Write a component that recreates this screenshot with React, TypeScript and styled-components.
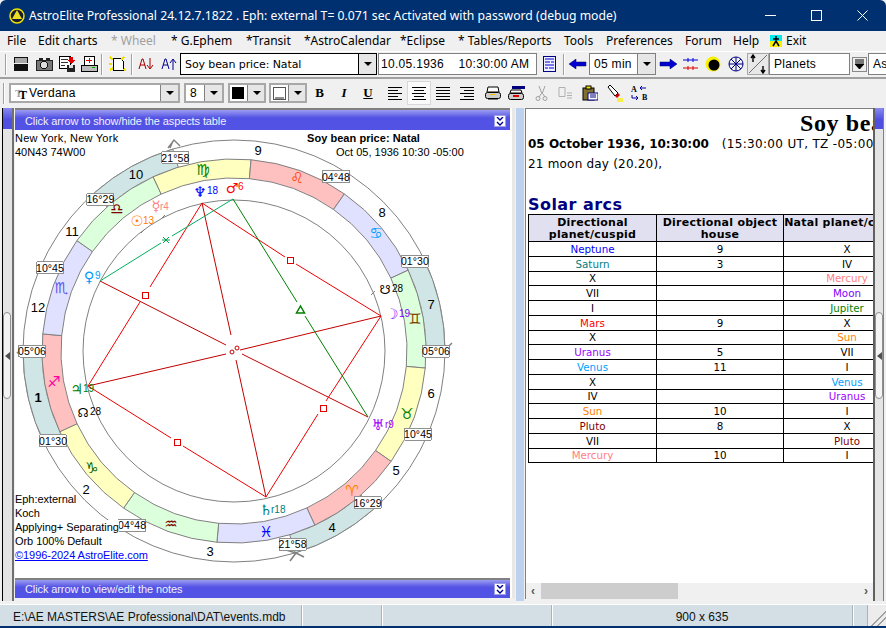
import React, { FC, ReactNode } from 'react';
import styled, { createGlobalStyle } from 'styled-components';

const GlobalStyle = createGlobalStyle`
  html, body { margin: 0; padding: 0; background: #f0f0f0; overflow: hidden; }
  #root { width: 886px; height: 628px; }
`;

const uiFont = `"Liberation Sans", Arial, sans-serif`;
const wideFont = `"DejaVu Sans", Verdana, sans-serif`;

const Window = styled.div`
  width: 886px;
  height: 628px;
  display: flex;
  flex-direction: column;
  background: #f0f0f0;
  overflow: hidden;
  font-family: ${uiFont};
  color: #000;
  border-radius: 6px 6px 0 0;
  border-bottom: 2px solid #00306f;
  box-sizing: border-box;
`;

const TitleBar = styled.div`
  height: 31px;
  flex: none;
  background: #00306f;
  color: #fff;
  display: flex;
  align-items: center;
  padding: 0 1px 0 9px;
  font: 12.2px "Noto Sans", sans-serif;
`;

const TitleText = styled.span`
  margin-left: 4px;
  flex: 1;
  white-space: nowrap;
`;

const Caption = styled.button`
  width: 46px;
  height: 31px;
  padding: 0;
  border: 0;
  background: none;
  display: flex;
  align-items: center;
  justify-content: center;
`;

const Menu = styled.div`
  height: 21px;
  flex: none;
  display: flex;
  align-items: center;
  padding-bottom: 1px;
  box-sizing: border-box;
  font: 12px "Noto Sans", sans-serif;
  white-space: nowrap;
  border-bottom: 1px solid #fff;
  margin-bottom: 1px;
`;

const MenuItem = styled.span<{ $w: number; $off?: boolean }>`
  width: ${p => p.$w}px;
  flex: none;
  color: ${p => (p.$off ? '#a0a0a0' : '#000')};
`;

const Bar = styled.div<{ $h: number; $line?: boolean }>`
  height: ${p => p.$h}px;
  flex: none;
  display: flex;
  align-items: center;
  position: relative;
  border-bottom: ${p => (p.$line ? '2px solid #a0a0a0' : '0')};
  padding-bottom: ${p => (p.$line ? 2 : 0)}px;
  box-sizing: border-box;
`;

const Grip = styled.i<{ $m?: number; $mr?: number }>`
  width: 1px;
  height: 21px;
  flex: none;
  background: #a0a0a0;
  border-right: 1px solid #fff;
  margin: 0 ${p => p.$mr ?? p.$m ?? 3}px 0 ${p => p.$m ?? 3}px;
`;

const Tool = styled.span<{ $w?: number; $pressed?: boolean; $ml?: number }>`
  width: ${p => p.$w ?? 24}px;
  height: 22px;
  margin-left: ${p => p.$ml ?? 0}px;
  flex: none;
  display: flex;
  align-items: center;
  justify-content: center;
  box-sizing: border-box;
  ${p => p.$pressed && 'background: #fafafa; border: 1px solid #d8d8d8; height: 24px;'}
`;

const Field = styled.div<{ $w: number; $dark?: boolean; $ml?: number; $pad?: number }>`
  width: ${p => p.$w}px;
  height: 22px;
  margin-left: ${p => p.$ml ?? 0}px;
  flex: none;
  box-sizing: border-box;
  background: #fff;
  border: 1px solid ${p => (p.$dark ? '#000' : '#808080')};
  display: flex;
  align-items: center;
  padding-left: ${p => p.$pad ?? 4}px;
  font: 12px ${uiFont};
  white-space: nowrap;
  overflow: hidden;
  position: relative;
`;

const FieldText = styled.span<{ $wide?: boolean }>`
  flex: 1;
  font-family: ${p => (p.$wide ? wideFont : uiFont)};
  font-size: ${p => (p.$wide ? 11 : 12)}px;
  letter-spacing: ${p => (p.$wide ? -0.1 : 0.3)}px;
`;

const Drop = styled.span<{ $dark?: boolean }>`
  width: 17px;
  align-self: stretch;
  flex: none;
  background: #e6e6e6;
  border-left: 1px solid ${p => (p.$dark ? '#000' : '#808080')};
  display: flex;
  align-items: center;
  justify-content: center;
  &::after {
    content: '';
    border: 4px solid transparent;
    border-top: 4px solid #000;
    border-bottom: 0;
  }
`;

const FormatField = styled(Field)`
  height: 20px;
  border: 2px solid #a8a8a8;
`;

const Main = styled.div`
  flex: 1;
  min-height: 0;
  display: flex;
  background: #f0f0f0;
  padding-top: 1px;
`;

const Rail = styled.div`
  width: 9px;
  margin-left: 2px;
  flex: none;
  border-left: 1px solid #000;
  border-right: 2px solid #707070;
  background: #e4e4e4;
  position: relative;
  display: flex;
  flex-direction: column;
  margin-bottom: 3px;
`;

const RailHead = styled.div`
  height: 21px;
  background: linear-gradient(#8a8af0, #5050e0 55%);
`;

const RailGrip = styled.div<{ $side: 'left' | 'right' }>`
  position: absolute;
  top: 204px;
  ${p => p.$side}: 0;
  width: 6px;
  height: 85px;
  background: #f4f4f4;
  border: 1px solid #909090;
  border-radius: 4px;
  display: flex;
  align-items: center;
  justify-content: center;
  &::after {
    content: '';
    border: 4px solid transparent;
    border-right: 5px solid #505050;
    border-left: 0;
  }
`;

const ChartPanel = styled.section`
  width: 497px;
  margin-left: 1px;
  flex: none;
  background: #fff;
  display: flex;
  flex-direction: column;
  position: relative;
  border-right: 3px solid #e8e8e8;
  margin-bottom: 6px;
  box-sizing: content-box;
`;

const FoldBar = styled.div<{ $h: number }>`
  height: ${p => p.$h}px;
  flex: none;
  width: 495px;
  border-top: 2px solid #808080;
  background: linear-gradient(#9c9cf2, #5252e4 40%);
  color: #f0f0ff;
  font: 11px ${uiFont};
  letter-spacing: -0.1px;
  display: flex;
  align-items: center;
  justify-content: space-between;
  padding: ${p => (p.$h > 20 ? 2 : 0)}px 4px 0 10px;
  box-sizing: border-box;
`;

const FoldArrow = styled.span`
  width: 12px;
  height: 12px;
  background: #fff;
  border: 1px solid #a0a0e0;
  box-sizing: border-box;
  display: flex;
  align-items: center;
  justify-content: center;
`;

const Canvas = styled.div`
  flex: 1;
  position: relative;
  min-height: 0;
`;

const Wheel = styled.svg`
  display: block;
  position: absolute;
  left: -15px;
  top: -130px;
  overflow: visible;
`;

const Note = styled.div<{ $top?: number; $tight?: boolean }>`
  position: absolute;
  left: 0;
  top: ${p => p.$top ?? 1}px;
  font: 11px/14px ${uiFont};
  letter-spacing: ${p => (p.$tight ? 0 : 0.24)}px;
  white-space: nowrap;
`;

const Legend = styled.div`
  position: absolute;
  left: 0;
  top: 362px;
  display: flex;
  flex-direction: column;
  align-items: flex-start;
  font: 11px/14px ${uiFont};
  letter-spacing: -0.05px;
  white-space: nowrap;
`;

const LegendLine = styled.span`
  background: #fff;
  a { color: #0000ff; text-decoration: underline; }
`;

const ChartTitle = styled.b`
  position: absolute;
  left: 292px;
  top: 1px;
  font: bold 11px/14px ${uiFont};
  letter-spacing: 0.05px;
  white-space: nowrap;
`;

const ChartDate = styled.span`
  position: absolute;
  left: 321px;
  top: 15px;
  font: 11px/14px ${uiFont};
  white-space: nowrap;
`;

const Splitter = styled.div`
  width: 8px;
  flex: none;
  background: #bcd2ee;
  margin: 0 1px 3px 1px;
`;

const ReportPanel = styled.section`
  width: 348px;
  flex: none;
  background: #fff;
  border: 1px solid #808080;
  border-width: 1px 0 0 1px;
  box-sizing: border-box;
  display: flex;
  flex-direction: column;
  margin-bottom: 5px;
`;

const ReportBody = styled.div`
  flex: 1;
  overflow: hidden;
  min-height: 0;
  padding: 1px 0 0 2px;
  white-space: nowrap;
  font: 11px ${wideFont};
`;

const ReportTitle = styled.div`
  font: bold 24px/26px "Liberation Serif", serif;
  letter-spacing: 0.6px;
  padding-left: 272px;
`;

const ReportDate = styled.div`
  height: 20px;
  line-height: 16px;
  font-size: 12px;
  display: flex;
  b { margin-right: 13px; }
  span { letter-spacing: 0.32px; }
`;

const ReportMoon = styled.div`
  height: 21px;
  line-height: 16px;
  font-size: 12px;
  letter-spacing: 0.2px;
`;

const ReportHead = styled.h2`
  margin: 18px 0 -1px;
  font: bold 16px/20px ${wideFont};
  color: #000080;
  letter-spacing: 0.45px;
`;

const Sheet = styled.table`
  border-collapse: collapse;
  margin: 0;
  table-layout: fixed;
  width: 382px;
  font: 10.3px/12px ${wideFont};
  td, th { border: 1px solid #000; text-align: center; padding: 0; overflow: hidden; }
  td { height: 13.75px; }
  th { background: #e0e0f0; font-size: 11px; line-height: 12px; height: 27px; padding-top: 2px; box-sizing: border-box; vertical-align: top; letter-spacing: 0.25px; }
  col:nth-child(1) { width: 128px; }
  col:nth-child(2), col:nth-child(3) { width: 127px; }
`;

const Cell = styled.td<{ $c?: string }>`
  color: ${p => p.$c ?? '#000'};
`;

const HScroll = styled.div`
  height: 16px;
  flex: none;
  background: #f0f0f0;
  display: flex;
  align-items: center;
  justify-content: space-between;
  padding: 0 5px;
  font: bold 12px ${uiFont};
  color: #555;
  position: relative;
  box-sizing: border-box;
`;

const HThumb = styled.span`
  position: absolute;
  left: 15px;
  top: 0;
  width: 137px;
  height: 16px;
  background: #cdcdcd;
`;

const RightRail = styled(Rail)`
  margin-left: 0;
  width: 8px;
  border-left: 2px solid #606060;
  border-right: 1px solid #808080;
`;

const StatusBar = styled.footer`
  height: 22px;
  flex: none;
  display: flex;
  background: #d3dfe5;
  border-top: 1px solid #fff;
  box-sizing: border-box;
  font: 12px ${uiFont};
  color: #111;
`;

const StatusCell = styled.div<{ $w: number; $center?: boolean }>`
  width: ${p => p.$w}px;
  flex: none;
  box-sizing: border-box;
  padding-left: ${p => (p.$center ? 0 : 13)}px;
  text-align: ${p => (p.$center ? 'center' : 'left')};
  line-height: 24px;
  border-right: 1px solid #a8b4ba;
  box-shadow: 1px 0 0 #fff;
  white-space: nowrap;
`;

const ResizeGrip = styled.div`
  flex: 1;
  background: linear-gradient(135deg, #ececec 60%, #a0a0a0 60%, #a0a0a0 66%, #ececec 66%, #ececec 76%, #a0a0a0 76%, #a0a0a0 82%, #ececec 82%);
`;

const Ico: FC<{ w?: number; h?: number; children: ReactNode }> = ({ w = 18, h = 18, children }) => (
  <svg width={w} height={h} viewBox={`0 0 ${w} ${h}`} shapeRendering="crispEdges">{children}</svg>
);

const menuItems: [string, number, boolean?][] = [
  ['File', 31], ['Edit charts', 73], ['* Wheel', 60, true], ['* G.Ephem', 75], ['*Transit', 58],
  ['*AstroCalendar', 96], ['*Eclipse', 58], ['* Tables/Reports', 106], ['Tools', 42], ['Preferences', 79],
  ['Forum', 48], ['Help', 37],
];

const cx = 234;
const cy = 351;
const pt = (r: number, deg: number) => {
  const a = (deg * Math.PI) / 180;
  return [cx + r * Math.cos(a), cy - r * Math.sin(a)];
};
// a0 < a1, both in degrees, counterclockwise on screen
const sector = (r0: number, r1: number, a0: number, a1: number) => {
  const [x0, y0] = pt(r1, a0);
  const [x1, y1] = pt(r1, a1);
  const [x2, y2] = pt(r0, a1);
  const [x3, y3] = pt(r0, a0);
  return `M${x0} ${y0}A${r1} ${r1} 0 0 0 ${x1} ${y1}L${x2} ${y2}A${r0} ${r0} 0 0 1 ${x3} ${y3}Z`;
};

const FIRE = '#ffc0c0';
const EARTH = '#ffffc0';
const AIR = '#dcffdc';
const WATER = '#e0e0ff';
const ANGLE = '#d0e6e6';

const signs: [number, string, string, number, number, string][] = [
  [174.9, FIRE, '♐', 54, 382, '#ff00a0'],
  [144.9, WATER, '♏', 61, 288, '#5858f0'],
  [114.9, AIR, '♎', 117, 209, '#800000'],
  [84.9, EARTH, '♍', 203, 170, '#008000'],
  [54.9, FIRE, '♌', 297, 178, '#ff4000'],
  [24.9, WATER, '♋', 376, 233, '#00a0ff'],
  [-5.1, AIR, '♊', 415, 319, '#804000'],
  [-35.1, EARTH, '♉', 407, 414, '#008000'],
  [-65.1, FIRE, '♈', 352, 491, '#ff8000'],
  [-95.1, WATER, '♓', 266, 532, '#0000ff'],
  [-125.1, AIR, '♒', 171, 524, '#800000'],
  [-155.1, EARTH, '♑', 92, 468, '#006000'],
];

// angular houses get the tinted outer band
const angular: [number, number][] = [[106.87, 131.4], [0, 26.4], [180, 206.4], [286.87, 311.4]];

const cusps: [number, string][] = [
  [180, '05°06'], [206.4, '01°30'], [239.7, '04°48'], [286.87, '21°58'], [311.4, '16°29'], [335.65, '10°45'],
  [0, '05°06'], [26.4, '01°30'], [59.7, '04°48'], [106.87, '21°58'], [131.4, '16°29'], [155.65, '10°45'],
];

const houses: [string, number, number, boolean?][] = [
  ['1', 38, 397, true], ['2', 86, 489], ['3', 210, 551], ['4', 332, 527], ['5', 396, 470], ['6', 431, 393],
  ['7', 431, 304], ['8', 382, 212], ['9', 258, 150], ['10', 136, 174], ['11', 72, 231], ['12', 38, 307],
];

const planets: [string, number, number, string, string, number, number, number][] = [
  ['♆', 200, 192, '#0000ff', '18', 207, 190, 14.5],
  ['♂', 232, 188, '#ff0000', '6', 238, 186, 14],
  ['☿', 156, 206, '#ff8080', 'r4', 160, 206, 14.5],
  ['☉', 137, 221, '#ff8000', '13', 143, 220, 14.5],
  ['♀', 89, 277, '#00a0ff', '9', 95, 275, 14.5],
  ['♃', 77, 389, '#008000', '19', 83, 388, 14.5],
  ['☊', 83, 412, '#000000', '28', 90, 411, 12.5],
  ['♄', 266, 510, '#008080', 'r18', 271, 509, 14.5],
  ['♅', 378, 425, '#a000ff', 'r9', 385, 424, 14.5],
  ['☽', 392, 314, '#8000ff', '19', 399, 313, 14.5],
  ['☋', 385, 289, '#000000', '28', 392, 288, 12.5],
];

const OPP = '#c00000';
const SQ = '#ee0000';
const aspects: [number, number, number, number, string][] = [
  [202, 203, 231, 335, OPP], [236, 360, 266, 497, OPP],
  [100, 281, 226, 345, OPP], [242, 354, 368, 417, OPP],
  [88, 386, 226, 354, OPP], [240, 350, 381, 316, OPP],
  [202, 203, 150, 287, SQ], [140, 302, 88, 386, SQ],
  [202, 203, 285, 257, SQ], [296, 264, 381, 316, SQ],
  [88, 386, 171, 438, SQ], [183, 446, 266, 497, SQ],
  [266, 497, 318, 414, SQ], [326, 401, 381, 316, SQ],
  [233, 199, 297, 302, '#008000'], [305, 316, 368, 417, '#008000'],
  [100, 281, 161, 243, '#00b060'], [172, 236, 233, 199, '#00b060'],
];

const boxes: [number, number][] = [[145, 295], [290, 260], [177, 442], [323, 408]];

const ticks: [number, number][] = [[143, 231], [163, 217], [373, 293]];

const ChartWheel: FC = () => (
  <Wheel width={886} height={628} viewBox="0 0 886 628">
    <circle cx={cx} cy={cy} r={211} fill="none" stroke="#808080" />
    {angular.map(([a0, a1]) => (
      <path key={a0} d={sector(192, 211, a0, a1)} fill={ANGLE} stroke="#808080" />
    ))}
    {signs.map(([a, fill]) => (
      <path key={a} d={sector(173, 192, a, a + 30)} fill={fill} stroke="#808080" />
    ))}
    <circle cx={cx} cy={cy} r={151} fill="none" stroke="#808080" />
    {ticks.map(([x, y]) => (
      <path key={x} d={`M${x - 2} ${y + 2}L${x + 2} ${y - 2}`} stroke="#808080" />
    ))}
    {aspects.map(([x1, y1, x2, y2, c], i) => (
      <line key={i} x1={x1} y1={y1} x2={x2} y2={y2} stroke={c} />
    ))}
    {boxes.map(([x, y]) => (
      <rect key={x} x={x - 3} y={y - 3} width={6} height={6} fill="#fff" stroke="#e00000" shapeRendering="crispEdges" />
    ))}
    <path d="M300.500 306l4 7h-8z" fill="#fff" stroke="#008000" strokeWidth={1.5} />
    <path d="M162 240h8M163 237l6 6M169 237l-6 6" stroke="#00a050" />
    <circle cx={232} cy={352} r={2} fill="#fff" stroke="#c00000" />
    <circle cx={237} cy={348} r={2} fill="#fff" stroke="#c00000" />
    <path d="M168 148l6-8 6 6M173 141l-3 7" fill="none" stroke="#808080" strokeWidth={1.4} />
    <path d="M290 561l6-8 8 4M296 553l-10-3" fill="none" stroke="#808080" strokeWidth={1.6} />
    <path d="M452 343l-3 3M17 352l3 3" stroke="#808080" strokeWidth={1.5} />
    {cusps.map(([a, label], i) => {
      const [x, y] = pt(202, a);
      return (
        <g key={i}>
          <rect x={x - 13.5} y={y - 6} width={27} height={12} rx={1} fill="#fff" stroke="#909090" shapeRendering="crispEdges" />
          <text x={x} y={y + 4} fontSize={10.5} fontFamily={uiFont} textAnchor="middle" letterSpacing={0.1}>{label}</text>
        </g>
      );
    })}
    {signs.map(([a, , glyph, x, y, c]) => (
      <text key={a} x={x} y={y} fontSize={15} fontFamily={wideFont} fill={c} textAnchor="middle" dominantBaseline="central">{`${glyph}\uFE0E`}</text>
    ))}
    {houses.map(([n, x, y, bold]) => (
      <text key={n} x={x} y={y + 5} fontSize={13} fontFamily={uiFont} fontWeight={bold ? 700 : 400} textAnchor="middle">{n}</text>
    ))}
    {planets.map(([glyph, x, y, c, deg, dx, dy, size]) => (
      <g key={glyph} fill={c} fontFamily={wideFont}>
        <text x={x} y={y} fontSize={size} textAnchor="middle" dominantBaseline="central">{`${glyph}\uFE0E`}</text>
        <text x={dx} y={dy + 4} fontSize={10} fontFamily={uiFont}>{deg}</text>
      </g>
    ))}
  </Wheel>
);

type Row = [string, string?, string?, string?, string?];
const rows: Row[] = [
  ['Neptune', '#0000ff', '9', 'X'],
  ['Saturn', '#008080', '3', 'IV'],
  ['X', undefined, '', 'Mercury', '#ff8080'],
  ['VII', undefined, '', 'Moon', '#8000ff'],
  ['I', undefined, '', 'Jupiter', '#008000'],
  ['Mars', '#ff0000', '9', 'X'],
  ['X', undefined, '', 'Sun', '#ff8000'],
  ['Uranus', '#a000ff', '5', 'VII'],
  ['Venus', '#00a0ff', '11', 'I'],
  ['X', undefined, '', 'Venus', '#00a0ff'],
  ['IV', undefined, '', 'Uranus', '#a000ff'],
  ['Sun', '#ff8000', '10', 'I'],
  ['Pluto', '#800000', '8', 'X'],
  ['VII', undefined, '', 'Pluto', '#800000'],
  ['Mercury', '#ff8080', '10', 'I'],
];

const Notebook = () => <Ico><rect x="2" y="2" width="14" height="14" fill="#111" /><rect x="3" y="3" width="12" height="5" fill="#a8a8a8" /><rect x="2" y="8" width="14" height="1" fill="#eee" /></Ico>;
const Camera = () => <Ico><rect x="1" y="5" width="16" height="10" fill="#777" stroke="#222" /><rect x="4" y="3" width="4" height="2" fill="#222" /><rect x="11" y="3" width="4" height="2" fill="#222" /><circle cx="9" cy="10" r="3.500" fill="#ddd" stroke="#111" /></Ico>;
const SaveDoc = () => <Ico><rect x="1" y="1" width="11" height="12" fill="#fff" stroke="#000" /><path d="M3 4h7M3 7h7M3 10h4" stroke="#333" /><rect x="9" y="10" width="8" height="7" fill="#222" /><rect x="11" y="10" width="4" height="3" fill="#ddd" /><path d="M11 2h4v3h2l-4 4-4-4h2z" fill="#e00000" /></Ico>;
const PrintChart = () => <Ico><rect x="4" y="1" width="10" height="9" fill="#fff" stroke="#000" /><path d="M6 5h6M9 3v5" stroke="#e00000" /><rect x="1" y="10" width="16" height="6" fill="#bbb" stroke="#000" /><rect x="12" y="12" width="3" height="1" fill="#0a0" /></Ico>;
const NewDoc = () => <Ico><path d="M5 3h7l3 3v9H5z" fill="#fff" stroke="#000" /><path d="M2 2l3 3M16 2l-3 3M2 15l3-2M1 9h3M16 14l2 2" stroke="#f0e000" strokeWidth="2" /></Ico>;

const Arrow: FC<{ flip?: boolean }> = ({ flip }) => (
  <svg width="18" height="10" viewBox="0 0 18 10" style={flip ? { transform: 'scaleX(-1)' } : undefined}>
    <path d="M0 5l7-5v3h10v4H7v3z" fill="#0000d0" stroke="#000060" strokeWidth=".5" />
  </svg>
);

const Chevrons = () => (
  <svg width="8" height="9" viewBox="0 0 8 9"><path d="M1 0l3 3 3-3M1 5l3 3 3-3" fill="none" stroke="#000090" strokeWidth="1.4" /></svg>
);

const alignPaths = [
  'M0 1h14M0 4h10M0 7h14M0 10h10M0 13h14',
  'M0 1h14M2 4h10M0 7h14M2 10h10M0 13h14',
  'M0 1h14M0 4h14M0 7h14M0 10h14M0 13h14',
  'M0 1h14M4 4h10M0 7h14M4 10h10M0 13h14',
];

const App: FC = () => (
  <Window>
    <GlobalStyle />
    <TitleBar>
      <svg width="16" height="16" viewBox="0 0 16 16">
        <circle cx="8" cy="8" r="7" fill="#1a1a30" stroke="#f0e000" strokeWidth="1.5" />
        <path d="M8 2l5 9H3z" fill="#e8e020" />
      </svg>
      <TitleText>AstroElite Professional 24.12.7.1822 . Eph: external T= 0.071 sec Activated with password (debug mode)</TitleText>
      <Caption aria-label="Minimize">
        <svg width="11" height="11"><path d="M0 5.500h11" stroke="#fff" /></svg>
      </Caption>
      <Caption aria-label="Maximize">
        <svg width="11" height="11"><rect x=".5" y=".5" width="10" height="10" fill="none" stroke="#fff" /></svg>
      </Caption>
      <Caption aria-label="Close">
        <svg width="11" height="11"><path d="M.5.5l10 10M10.500.5l-10 10" stroke="#fff" /></svg>
      </Caption>
    </TitleBar>

    <Menu>
      <MenuItem $w={7} />
      {menuItems.map(([label, w, off]) => (
        <MenuItem key={label} $w={w} $off={off}>{label}</MenuItem>
      ))}
      <svg width="12" height="12" viewBox="0 0 12 12">
        <rect width="12" height="6" fill="#00e8f0" />
        <rect y="6" width="12" height="6" fill="#f8f000" />
        <path d="M6 1v5M6 6L3 11M6 6l3 5M3 4h6" stroke="#000" strokeWidth="1.5" />
      </svg>
      <MenuItem $w={4} />
      <span>Exit</span>
    </Menu>

    <Bar $h={26} $line>
      <Grip $m={5} $mr={3} />
      <Tool $w={22}><Notebook /></Tool>
      <Tool $w={23}><Camera /></Tool>
      <Tool $w={23}><SaveDoc /></Tool>
      <Tool $w={22}><PrintChart /></Tool>
      <Grip $m={1} />
      <Tool $w={26}><NewDoc /></Tool>
      <Grip $m={1} />
      <Tool $w={23}>
        <svg width="16" height="14" viewBox="0 0 16 14"><path d="M1 12L4 2h1l3 10M2 8h5" fill="none" stroke="#a00000" /><path d="M12 1v10M9 8l3 4 3-4" fill="none" stroke="#a00000" /></svg>
      </Tool>
      <Tool $w={23}>
        <svg width="16" height="14" viewBox="0 0 16 14"><path d="M1 12L4 2h1l3 10M2 8h5" fill="none" stroke="#000090" /><path d="M12 13V3M9 6l3-4 3 4" fill="none" stroke="#000090" /></svg>
      </Tool>
      <Field $w={197} $dark>
        <FieldText $wide>Soy bean price: Natal</FieldText>
        <Drop $dark />
      </Field>
      <Field $w={159} $ml={1} $pad={2}>
        <FieldText>10.05.1936&nbsp;&nbsp;&nbsp;&nbsp;10:30:00 AM</FieldText>
      </Field>
      <Tool $w={24}>
        <svg width="13" height="16" viewBox="0 0 13 16"><rect x=".5" y=".5" width="12" height="15" fill="#eef" stroke="#000080" /><path d="M2 3h9M2 6h5M8 6h3M2 9h9M2 12h3M6 12h5" stroke="#0000d0" /></svg>
      </Tool>
      <Grip $m={2} />
      <Tool $w={22}><Arrow /></Tool>
      <Field $w={67}>
        <FieldText>05 min</FieldText>
        <Drop />
      </Field>
      <Tool $w={24}><Arrow flip /></Tool>
      <Tool $w={21}>
        <svg width="15" height="15" viewBox="0 0 15 15"><path d="M0 3h15M5 1v4M10 1v4" stroke="#0000e0" /><path d="M0 11h15M5 9v4M10 9v4" stroke="#e00000" /></svg>
      </Tool>
      <Tool $w={24}>
        <svg width="16" height="16"><circle cx="8" cy="8" r="7.500" fill="#f8f000" /><circle cx="9" cy="9" r="5.500" fill="#000" /></svg>
      </Tool>
      <Tool $w={22}>
        <svg width="16" height="16" viewBox="0 0 16 16"><circle cx="8" cy="8" r="7" fill="none" stroke="#000080" /><path d="M1 8h14M8 1v14M3 3l10 10M13 3L3 13" stroke="#000080" /></svg>
      </Tool>
      <Tool $w={22}>
        <svg width="22" height="22" viewBox="0 0 22 22"><rect x=".5" y=".5" width="21" height="21" fill="#e8e8e8" stroke="#a8a8a8" /><path d="M2 20L20 2" stroke="#707070" /><path d="M6 9V3M4 5l2-3 2 3M16 13v6M14 17l2 3 2-3" fill="none" stroke="#000" strokeWidth="1.4" /></svg>
      </Tool>
      <Field $w={81}>
        <FieldText>Planets</FieldText>
      </Field>
      <Tool $w={18}>
        <svg width="15" height="15" viewBox="0 0 15 15"><rect x=".5" y=".5" width="14" height="14" fill="#eee" stroke="#888" /><path d="M3 3h9M3 5h9M3 7h9l-4.500 5z" fill="#000" stroke="#000" /></svg>
      </Tool>
      <Field $w={20}><FieldText>As</FieldText></Field>
    </Bar>

    <Bar $h={28}>
      <Grip $m={3} $mr={4} />
      <FormatField $w={171}>
        <svg width="14" height="14" viewBox="0 0 14 14" style={{ flex: 'none' }}>
          <text x="0" y="11" fontSize="11" fontFamily="Liberation Serif" fill="#a0a0a0" fontWeight="700">T</text>
          <text x="4" y="13" fontSize="12" fontFamily="Liberation Serif" fontWeight="700">T</text>
        </svg>
        <FieldText>Verdana</FieldText>
        <Drop />
      </FormatField>
      <FormatField $w={40} $ml={4}>
        <FieldText>8</FieldText>
        <Drop />
      </FormatField>
      <FormatField $w={38} $ml={4} $pad={2}>
        <svg width="12" height="12" style={{ flex: 'none', marginRight: 3 }}><rect width="12" height="12" /></svg>
        <Drop />
      </FormatField>
      <FormatField $w={38} $ml={3} $pad={2}>
        <svg width="13" height="13" style={{ flex: 'none', marginRight: 2 }}><rect x=".5" y=".5" width="12" height="12" fill="#fff" stroke="#555" /><path d="M2 11h9" stroke="#222" /></svg>
        <Drop />
      </FormatField>
      <Tool $w={25}><strong style={{ font: 'bold 13px "Liberation Serif"' }}>B</strong></Tool>
      <Tool $w={24}><em style={{ font: 'italic bold 13px "Liberation Serif"' }}>I</em></Tool>
      <Tool $w={24}><span style={{ font: 'bold 13px "Liberation Serif"', textDecoration: 'underline' }}>U</span></Tool>
      {alignPaths.map((d, i) => (
        <Tool key={d} $w={24} $ml={i === 0 ? 3 : 0} $pressed={i === 1}>
          <svg width="14" height="14" shapeRendering="crispEdges"><path d={d} stroke="#000" /></svg>
        </Tool>
      ))}
      <Tool $w={24} $ml={2}>
        <svg width="16" height="15" viewBox="0 0 16 15"><path d="M3 1h10l1 5H2z" fill="#fff" stroke="#000" /><rect x=".5" y="6.500" width="15" height="6" rx="2" fill="#ccc" stroke="#000" /><rect x="5" y="8" width="5" height="1" fill="#f0c000" /><path d="M3 13h10" stroke="#000" /></svg>
      </Tool>
      <Tool $w={24}>
        <svg width="18" height="15" viewBox="0 0 18 15"><rect x="4" y="0" width="13" height="3" fill="#00007f" /><path d="M3 4h10l1 3H2z" fill="#fff" stroke="#000" /><rect x=".5" y="7.500" width="15" height="6" rx="2" fill="#ccc" stroke="#000" /><rect x="5" y="9" width="6" height="2" fill="#e00000" /></svg>
      </Tool>
      <Tool $w={24.5}>
        <svg width="13" height="15" viewBox="0 0 13 15"><path d="M4 0l3 8 3-8M6 8l-2 3M8 8l2 3" fill="none" stroke="#a0a0a0" /><circle cx="3" cy="12.500" r="2" fill="none" stroke="#a0a0a0" /><circle cx="10" cy="12.500" r="2" fill="none" stroke="#a0a0a0" /></svg>
      </Tool>
      <Tool $w={24.5}>
        <svg width="15" height="13" viewBox="0 0 15 13"><path d="M1 .5h6v9H1zM9 6h5M9 8.500h5M9 11h5" fill="none" stroke="#b0b0b0" /></svg>
      </Tool>
      <Tool $w={24.5}>
        <svg width="16" height="16" viewBox="0 0 16 16"><rect x="1" y="3" width="11" height="12" fill="#807030" stroke="#000" /><rect x="4" y="1" width="5" height="3" fill="#f0e000" stroke="#000" /><rect x="6" y="8" width="10" height="7" fill="#fff" stroke="#000080" /><path d="M8 10h6M8 12h6" stroke="#000080" /></svg>
      </Tool>
      <Tool $w={24.5}>
        <svg width="16" height="17" viewBox="0 0 16 17"><path d="M1 2l2-2 8 8-3 3z" fill="#fff" stroke="#000" /><path d="M8 11l3-3 2 2-3 3z" fill="#d00000" /><path d="M10 13h6v4h-6z" fill="#f8f000" opacity=".7" /></svg>
      </Tool>
      <Tool $w={24.5}>
        <svg width="17" height="16" viewBox="0 0 17 16">
          <text x="0" y="7" fontSize="8" fontWeight="700" fontFamily="Liberation Serif">A</text>
          <text x="11" y="15" fontSize="8" fontWeight="700" fontFamily="Liberation Serif">B</text>
          <path d="M9 3h6M11 1L9 3l2 2M1 10v3h6M5 11l2 2-2 2" fill="none" stroke="#0000a0" />
        </svg>
      </Tool>
    </Bar>

    <Main>
      <Rail>
        <RailHead />
        <RailGrip $side="left" />
      </Rail>
      <ChartPanel>
        <FoldBar $h={22}>
          Click arrow to show/hide the aspects table
          <FoldArrow><Chevrons /></FoldArrow>
        </FoldBar>
        <Canvas>
          <ChartWheel />
          <Note>New York, New York</Note>
          <Note $top={15} $tight>40N43 74W00</Note>
          <ChartTitle>Soy bean price: Natal</ChartTitle>
          <ChartDate>Oct 05, 1936 10:30 -05:00</ChartDate>
          <Legend>
            <LegendLine>Eph:external</LegendLine>
            <LegendLine>Koch</LegendLine>
            <LegendLine>Applying+ Separating</LegendLine>
            <LegendLine>Orb 100% Default</LegendLine>
            <LegendLine><a href="#astroelite">©1996-2024 AstroElite.com</a></LegendLine>
          </Legend>
        </Canvas>
        <FoldBar $h={20}>
          Click arrow to view/edit the notes
          <FoldArrow><Chevrons /></FoldArrow>
        </FoldBar>
      </ChartPanel>
      <Splitter />
      <ReportPanel>
        <ReportBody>
          <ReportTitle>Soy bean price</ReportTitle>
          <ReportDate><b>05 October 1936, 10:30:00</b><span>(15:30:00 UT, TZ -05:00)</span></ReportDate>
          <ReportMoon>21 moon day (20.20),</ReportMoon>
          <ReportHead>Solar arcs</ReportHead>
          <Sheet>
            <colgroup><col /><col /><col /></colgroup>
            <thead>
              <tr><th>Directional<br />planet/cuspid</th><th>Directional object<br />house</th><th>Natal planet/cuspid</th></tr>
            </thead>
            <tbody>
              {rows.map(([a, ac, house, b, bc], i) => (
                <tr key={i}>
                  <Cell $c={ac}>{a}</Cell>
                  <Cell>{house}</Cell>
                  <Cell $c={bc}>{b}</Cell>
                </tr>
              ))}
            </tbody>
          </Sheet>
        </ReportBody>
        <HScroll>
          <HThumb />
          <span>‹</span>
          <span>›</span>
        </HScroll>
      </ReportPanel>
      <RightRail>
        <RailHead />
        <RailGrip $side="right" />
      </RightRail>
    </Main>

    <StatusBar>
      <StatusCell $w={302}>E:\AE MASTERS\AE Professional\DAT\events.mdb</StatusCell>
      <StatusCell $w={80} />
      <StatusCell $w={170} />
      <StatusCell $w={301} $center>900 x 635</StatusCell>
      <StatusCell $w={15} />
      <ResizeGrip />
    </StatusBar>
  </Window>
);

export default App;
